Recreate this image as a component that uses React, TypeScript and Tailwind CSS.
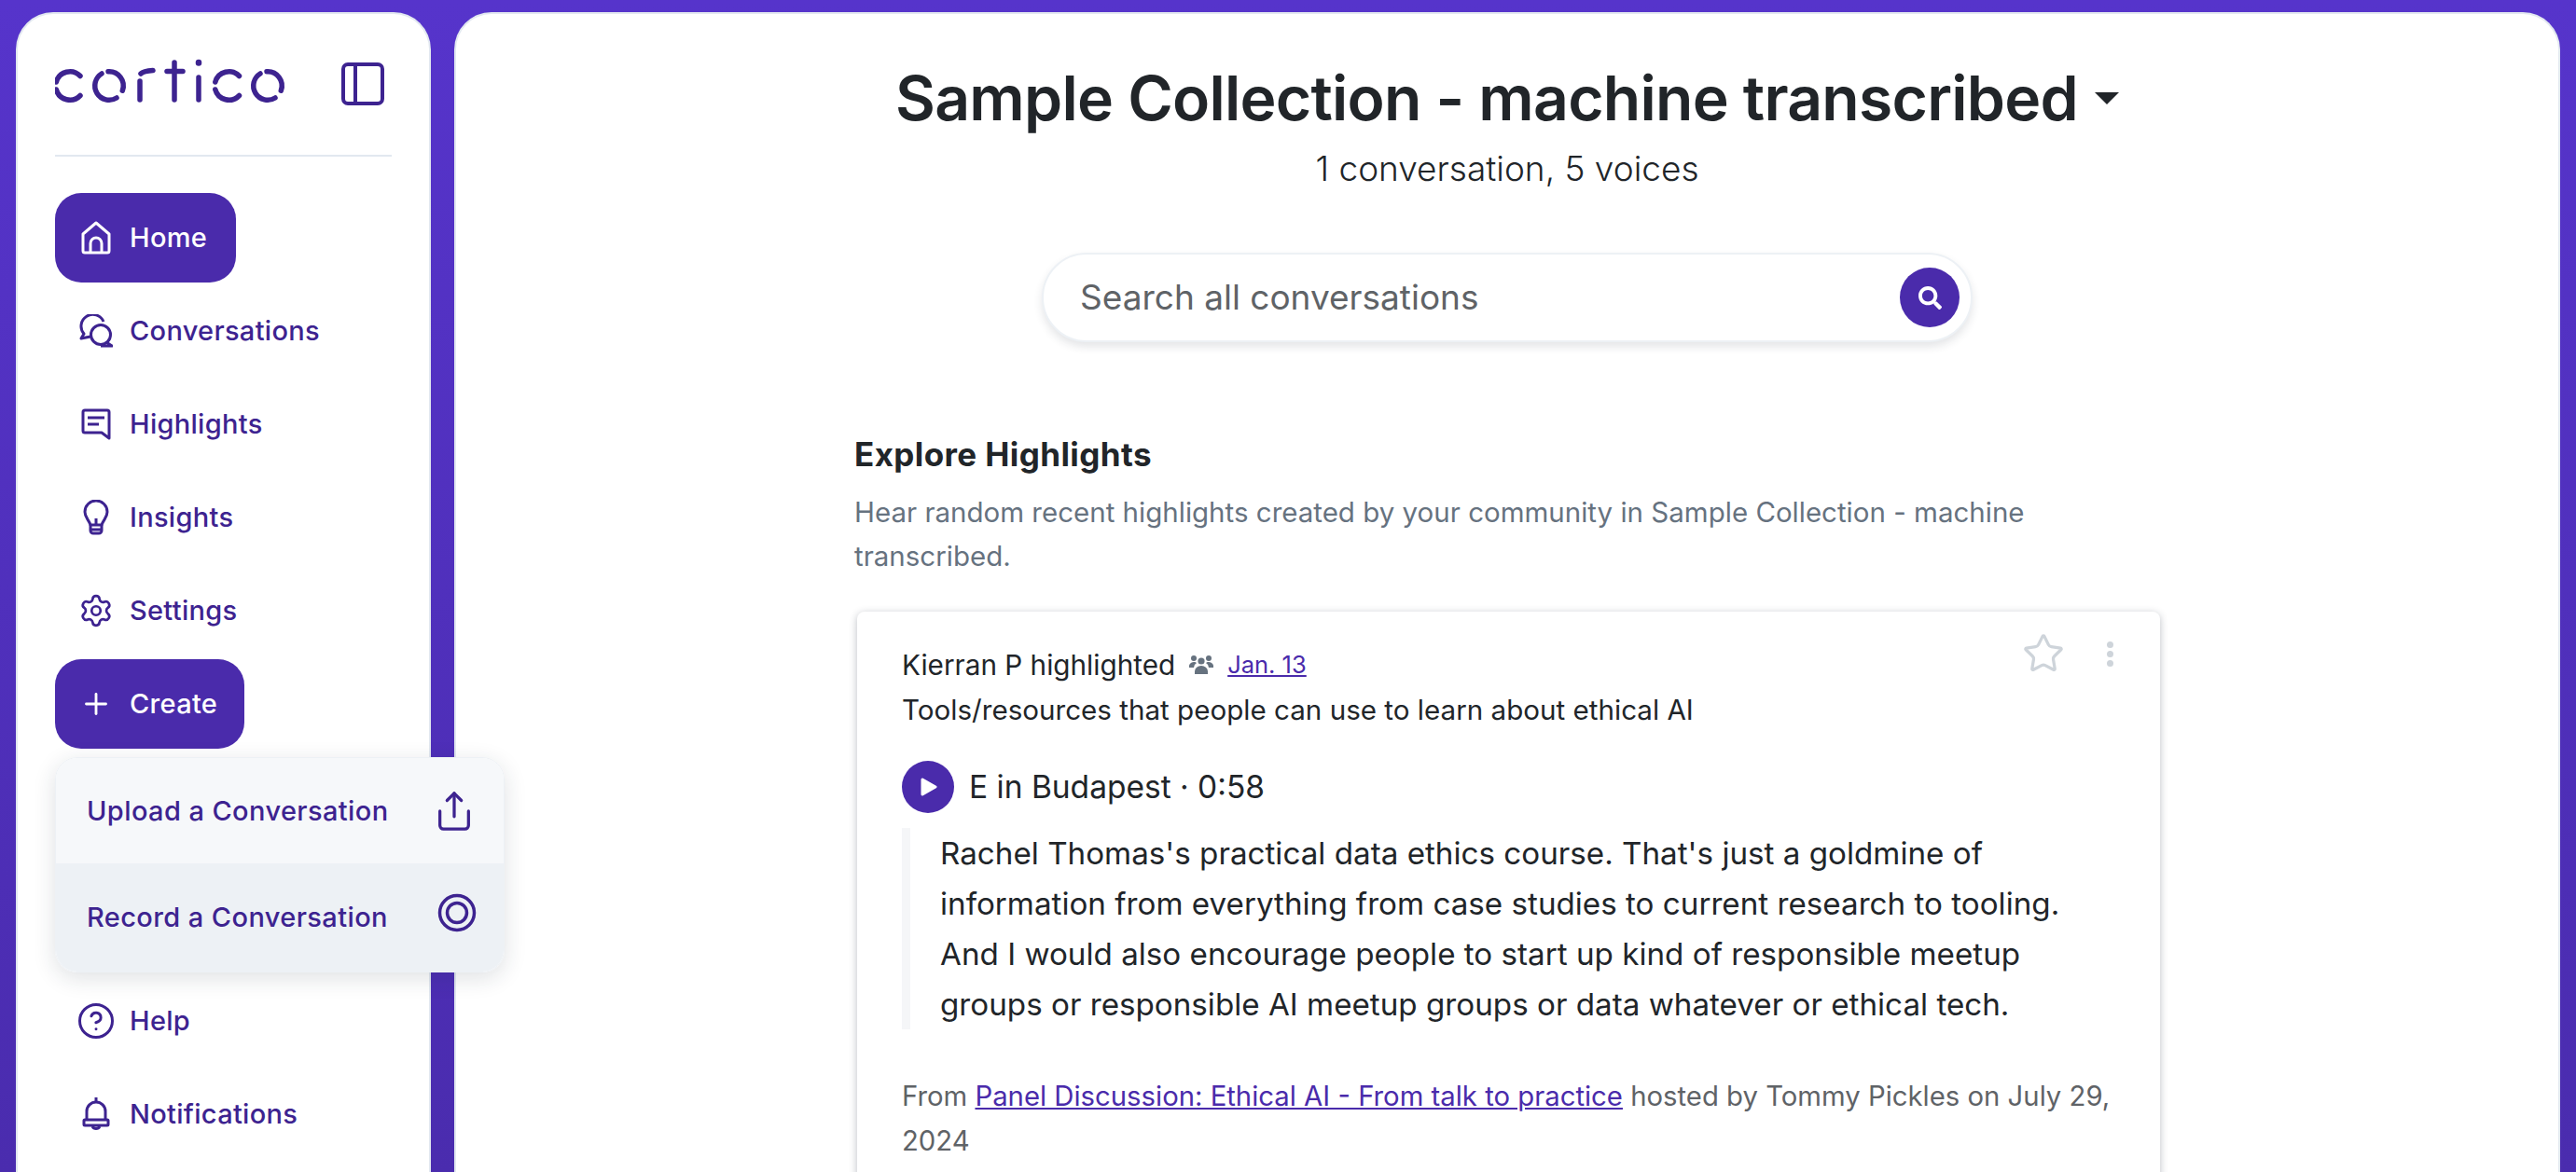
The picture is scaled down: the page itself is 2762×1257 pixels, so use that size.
import { CircleHelp, Plus, Settings, Share, Star } from 'lucide-react'
import { FaSearch } from 'react-icons/fa'

const font = 'font-["Inter","Noto_Sans",sans-serif]'

function Logo() {
  return (
    <svg width="250" height="52" viewBox="0 0 250 52" fill="none" stroke="#3d2390" strokeWidth="5.5" strokeLinecap="round">
      {/* c */}
      <path d="M27 20.5A15.2 15.2 0 0 0 1.3 27" />
      <path d="M1.3 35A15.2 15.2 0 0 0 27 41.5" />
      {/* o */}
      <path d="M50 18A15.2 15.2 0 0 0 66 44" />
      <path d="M57 15.8A15.2 15.2 0 0 1 72.3 36.2" />
      {/* r */}
      <path d="M91 46V26" />
      <path d="M92 18c2-2 6-3 13-3.5" />
      {/* t */}
      <path d="M128 6v40" />
      <path d="M120 15.5h17" />
      {/* i */}
      <path d="M154 22v24" />
      <path d="M154 6v.5" strokeWidth="6.5" />
      {/* c */}
      <path d="M197.5 20.5A15.2 15.2 0 0 0 171.8 27" />
      <path d="M171.8 35A15.2 15.2 0 0 0 197.5 41.5" />
      {/* o */}
      <path d="M220 18A15.2 15.2 0 0 0 236 44" />
      <path d="M227 15.8A15.2 15.2 0 0 1 242.3 36.2" />
    </svg>
  )
}

function HomeIcon() {
  return (
    <svg width="32" height="36" viewBox="0 0 32 36" fill="none" stroke="currentColor" strokeWidth="3" strokeLinejoin="round">
      <path d="M16 2 L30 14 V32 a2 2 0 0 1-2 2 H4 a2 2 0 0 1-2-2 V14 Z" />
      <path d="M10 34 V24 a6 6 0 0 1 12 0 V34" />
    </svg>
  )
}

function ChatsIcon() {
  return (
    <svg width="36" height="36" viewBox="0 0 36 36" fill="none" stroke="currentColor" strokeWidth="3" strokeLinejoin="round">
      <path d="M12 24 L2 26 L5 21 A12.5 12.5 0 1 1 26 8" />
      <circle cx="23" cy="22" r="10.5" />
      <path d="M29 30 L35 34 H23" />
    </svg>
  )
}

function NoteIcon() {
  return (
    <svg width="32" height="34" viewBox="0 0 32 34" fill="none" stroke="currentColor" strokeWidth="3" strokeLinejoin="round">
      <path d="M4 2 H28 a2 2 0 0 1 2 2 V32 L22 26 H4 a2 2 0 0 1-2-2 V4 a2 2 0 0 1 2-2 Z" />
      <path d="M7 10 H25 M7 17 H19" />
    </svg>
  )
}

function BulbIcon() {
  return (
    <svg width="28" height="38" viewBox="0 0 28 38" fill="none" stroke="currentColor" strokeWidth="3" strokeLinejoin="round">
      <path d="M8 27 C6 21 2 19 2 13 A12 12 0 0 1 26 13 C26 19 22 21 20 27 Z" />
      <path d="M8 27 V33 a3 3 0 0 0 3 3 H17 a3 3 0 0 0 3-3 V27 M14 20 V27 M8 32 H20" />
    </svg>
  )
}

function BellIcon() {
  return (
    <svg width="30" height="38" viewBox="0 0 30 38" fill="none" stroke="currentColor" strokeWidth="3" strokeLinejoin="round">
      <path d="M15 1 V5" />
      <path d="M5 24 V16 a10 10 0 0 1 20 0 V24" />
      <path d="M3 25 H27 a1 1 0 0 1 1 1 V30 a1 1 0 0 1-1 1 H3 a1 1 0 0 1-1-1 V26 a1 1 0 0 1 1-1 Z" />
      <path d="M11 32 a4.5 4.5 0 0 0 8 0" />
    </svg>
  )
}

function PeopleIcon() {
  return (
    <svg width="26" height="22" viewBox="0 0 26 22" fill="#66727f">
      <circle cx="5" cy="4" r="3" />
      <circle cx="21" cy="4" r="3" />
      <circle cx="13" cy="7" r="3.6" />
      <path d="M0 14 a5 5 0 0 1 5-6 c1.5 0 2.5 .5 3 1 a6 6 0 0 0-3 5 Z" />
      <path d="M26 14 a5 5 0 0 0-5-6 c-1.5 0-2.5 .5-3 1 a6 6 0 0 1 3 5 Z" />
      <path d="M6 21 V18 a7 6 0 0 1 14 0 V21 Z" />
    </svg>
  )
}

function NavItem({ label, children }: { label: string; children: React.ReactNode }) {
  return (
    <a className="flex h-[96px] items-center text-[#3d2390]">
      <span className="flex w-[80px] shrink-0 items-center justify-center pl-[8px]">{children}</span>
      <span className="text-[29px] font-[550] tracking-[0.3px]">{label}</span>
    </a>
  )
}

function PrimaryButton({ label, width, children }: { label: string; width: string; children: React.ReactNode }) {
  return (
    <a className={`flex h-[96px] items-center rounded-[28px] bg-[#4a2bab] text-white ${width}`}>
      <span className="flex w-[80px] shrink-0 items-center justify-center pl-[8px]">{children}</span>
      <span className="text-[29px] font-[550] tracking-[0.3px]">{label}</span>
    </a>
  )
}

export default function App() {
  return (
    <div className={`flex h-screen gap-[25px] overflow-hidden bg-gradient-to-b from-[#5634cb] to-[#4a2cae] pl-[17px] pr-[17px] pt-[13px] ${font}`}>
      <aside className="relative z-10 flex w-[445px] shrink-0 flex-col rounded-t-[40px] border-2 border-b-0 border-[#e2e8f0] bg-white px-[40px]">
        <div className="flex h-[153px] items-start justify-between border-b-2 border-[#e2e8f0] pr-[8px] pt-[46px]">
          <Logo />
          <svg className="mt-[6px]" width="46" height="46" viewBox="0 0 46 46" fill="none" stroke="#3d2390" strokeWidth="4">
            <rect x="2" y="2" width="42" height="42" rx="5" />
            <path d="M15 2 V44" />
          </svg>
        </div>
        <nav className="mt-[39px] flex flex-col gap-[4px]">
          <PrimaryButton label="Home" width="w-[194px]"><HomeIcon /></PrimaryButton>
          <NavItem label="Conversations"><ChatsIcon /></NavItem>
          <NavItem label="Highlights"><NoteIcon /></NavItem>
          <NavItem label="Insights"><BulbIcon /></NavItem>
          <NavItem label="Settings"><Settings size={38} strokeWidth={1.7} /></NavItem>
          <PrimaryButton label="Create" width="w-[203px]"><Plus size={36} strokeWidth={1.9} /></PrimaryButton>
          <div className="mt-[5px] w-[482px] overflow-hidden rounded-[24px] border border-[#edf1f5] shadow-[0_6px_24px_rgba(30,40,60,0.14)]">
            <a className="flex h-[113px] items-center justify-between bg-[#f6f8fa] pl-[33px] pr-[30px] text-[#3d2390]">
              <span className="text-[29px] font-[550] tracking-[0.4px]">Upload a Conversation</span>
              <Share size={46} strokeWidth={1.7} />
            </a>
            <a className="flex h-[116px] items-center justify-between bg-[#edf1f5] pl-[33px] pr-[30px] text-[#3d2390]">
              <span className="text-[29px] font-[550] tracking-[0.4px]">Record a Conversation</span>
              <svg width="42" height="42" viewBox="0 0 42 42" fill="none" stroke="currentColor" strokeWidth="3.5" className="-mt-[10px] -mr-[1px]">
                <circle cx="21" cy="21" r="18.5" />
                <circle cx="21" cy="21" r="10.5" />
              </svg>
            </a>
          </div>
          <NavItem label="Help"><CircleHelp size={42} strokeWidth={1.7} /></NavItem>
          <NavItem label="Notifications"><BellIcon /></NavItem>
        </nav>
      </aside>

      <main className="flex min-w-0 flex-1 flex-col items-center overflow-hidden rounded-t-[40px] border-2 border-b-0 border-[#e2e8f0] bg-white pt-[49px]">
        <div className="flex shrink-0 items-center gap-[18px]">
          <h1 className="text-[66px] font-semibold leading-[82px] tracking-[-0.75px] text-[#212529]">Sample Collection - machine transcribed</h1>
          <span className="h-0 w-0 border-x-[13px] border-t-[13px] border-x-transparent border-t-[#212529]" />
        </div>
        <p className="mt-[10px] shrink-0 text-[37px] font-light leading-[50px] text-[#212529]">1 conversation, 5 voices</p>

        <div className="mt-[65px] flex h-[96px] w-[998px] shrink-0 items-center justify-between rounded-full border-2 border-[#edf1f5] bg-white pl-[39px] pr-[12px] shadow-[0_5px_10px_rgba(30,40,60,0.12)]">
          <span className="text-[37px] text-[#5f6367]">Search all conversations</span>
          <span className="flex h-[64px] w-[64px] items-center justify-center rounded-full bg-[#4a2bab] text-white">
            <FaSearch size={25} />
          </span>
        </div>

        <section className="mt-[95px] w-[1400px] shrink-0">
          <h2 className="text-[35px] font-bold leading-[50px] tracking-[0.4px] text-[#212529]">Explore Highlights</h2>
          <p className="mt-[14px] text-[29.5px] leading-[47px] text-[#66727f]">
            Hear random recent highlights created by your community in Sample Collection - machine transcribed.
          </p>

          <article className="relative mt-[36px] ml-[3px] rounded-[8px] bg-white px-[48px] pb-[80px] pt-[33px] shadow-[0_2px_8px_rgba(30,40,60,0.3)]">
            <div className="absolute right-[50px] top-[22px] flex items-center gap-[45px] text-[#ced4da]">
              <Star size={46} strokeWidth={1.7} />
              <div className="flex flex-col gap-[3px]">
                <span className="h-[7px] w-[7px] rounded-full bg-[#ced4da]" />
                <span className="h-[7px] w-[7px] rounded-full bg-[#ced4da]" />
                <span className="h-[7px] w-[7px] rounded-full bg-[#ced4da]" />
              </div>
            </div>
            <div className="flex items-center text-[29.7px] leading-[48px] text-[#212529]">
              <span>Kierran P highlighted</span>
              <span className="ml-[15px]"><PeopleIcon /></span>
              <a className="ml-[15px] text-[25.5px] text-[#4a2bab] underline">Jan. 13</a>
            </div>
            <p className="text-[29.6px] leading-[48px] text-[#212529]">Tools/resources that people can use to learn about ethical AI</p>

            <div className="mt-[31px] flex items-center gap-[16px]">
              <span className="flex h-[56px] w-[56px] items-center justify-center rounded-full bg-[#4a2bab] pl-[2px]">
                <svg width="18" height="20" viewBox="0 0 18 20" fill="#fff"><path d="M2 2 L16 10 L2 18 Z" stroke="#fff" strokeWidth="3" strokeLinejoin="round" /></svg>
              </span>
              <span className="text-[33.5px] text-[#212529]">E in Budapest · 0:58</span>
            </div>
            <blockquote className="mt-[16px] border-l-[9px] border-[#f5f6f8] pl-[32px] text-[33.2px] leading-[54px] text-[#212529]">
              Rachel Thomas's practical data ethics course. That's just a goldmine of information from everything from case studies to current research to tooling. And I would also encourage people to start up kind of responsible meetup groups or responsible AI meetup groups or data whatever or ethical tech.
            </blockquote>
            <p className="mt-[48px] text-[29.3px] leading-[48px] text-[#5f6367]">
              From <a className="text-[#4a2bab] underline">Panel Discussion: Ethical AI - From talk to practice</a> hosted by Tommy Pickles on July 29, 2024
            </p>
          </article>
        </section>
      </main>
    </div>
  )
}
